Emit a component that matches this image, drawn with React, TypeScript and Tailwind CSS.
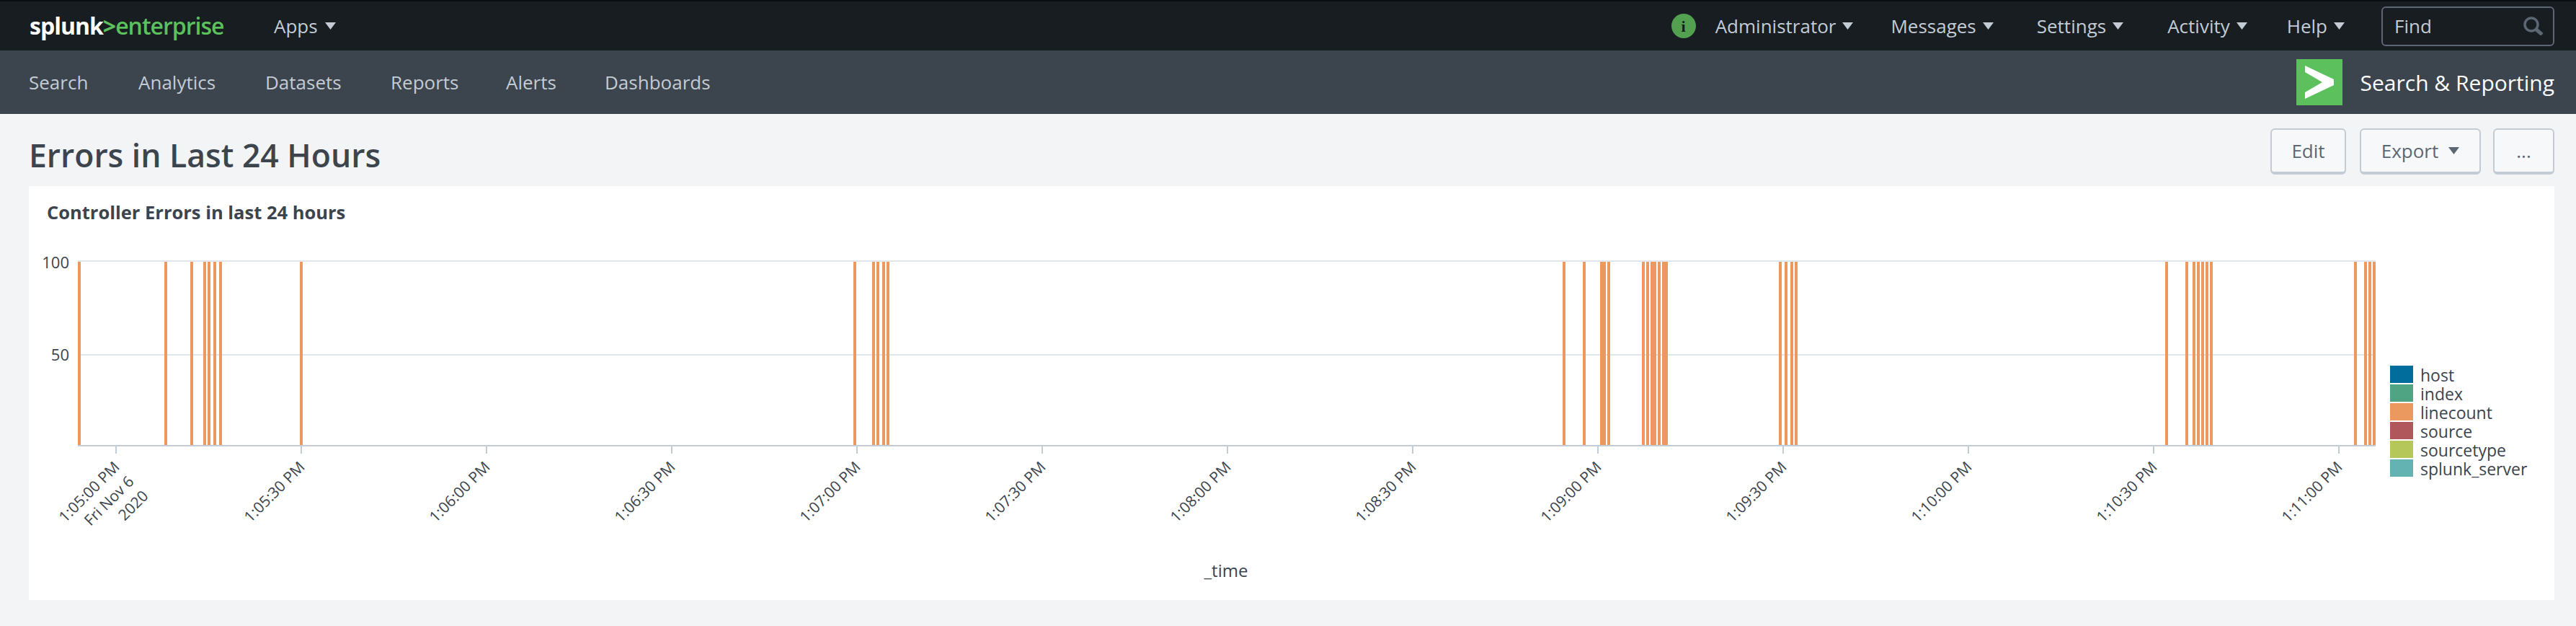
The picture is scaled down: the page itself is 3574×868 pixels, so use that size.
import React from 'react';

const fontStack = { fontFamily: '"Open Sans", Lato, sans-serif' };

const leftNav = [
  { label: 'Search', w: 'w-[152px]' },
  { label: 'Analytics', w: 'w-[176px]' },
  { label: 'Datasets', w: 'w-[174px]' },
  { label: 'Reports', w: 'w-[160px]' },
  { label: 'Alerts', w: 'w-[137px]' },
  { label: 'Dashboards', w: 'w-[160px]' },
];

const rightNav = [
  { label: 'Administrator', mr: 'mr-[52px]' },
  { label: 'Messages', mr: 'mr-[60px]' },
  { label: 'Settings', mr: 'mr-[61px]' },
  { label: 'Activity', mr: 'mr-[55px]' },
  { label: 'Help', mr: 'mr-[51px]' },
];

const bars = [
  [108, 112], [228, 232], [264, 268], [282, 286], [288, 292], [296, 300], [304, 308], [416, 420],
  [1184, 1188], [1210, 1214], [1216, 1220], [1224, 1228], [1230, 1234],
  [2168, 2172], [2196, 2200], [2220, 2228], [2230, 2234], [2278, 2282], [2284, 2288], [2290, 2298],
  [2300, 2304], [2306, 2314], [2468, 2472], [2476, 2480], [2484, 2488], [2490, 2494],
  [3004, 3008], [3032, 3036], [3042, 3046], [3048, 3052], [3054, 3058], [3060, 3064], [3066, 3070],
  [3266, 3270], [3280, 3284], [3286, 3290], [3292, 3296],
];

const ticks = [
  '1:05:30 PM', '1:06:00 PM', '1:06:30 PM', '1:07:00 PM', '1:07:30 PM', '1:08:00 PM',
  '1:08:30 PM', '1:09:00 PM', '1:09:30 PM', '1:10:00 PM', '1:10:30 PM', '1:11:00 PM',
];

const legend = [
  { name: 'host', color: 'bg-[#006d9c]' },
  { name: 'index', color: 'bg-[#4fa484]' },
  { name: 'linecount', color: 'bg-[#ec9960]' },
  { name: 'source', color: 'bg-[#af575a]' },
  { name: 'sourcetype', color: 'bg-[#b6c75a]' },
  { name: 'splunk_server', color: 'bg-[#62b3b2]' },
];

function Caret({ color = '#c3cbd4' }: { color?: string }) {
  return (
    <svg width="15" height="10" viewBox="0 0 15 10" className="shrink-0">
      <path d="M0 0h15L7.5 10z" fill={color} />
    </svg>
  );
}

function TickLabel({ x, lines }: { x: number; lines: string[] }) {
  return (
    <>
      {lines.map((line, i) => (
        <text
          key={line}
          transform={`translate(${x + 6 + i * 20} ${649 + i * 20}) rotate(-45)`}
          textAnchor="end"
          fontSize="21"
          fill="#3c444d"
        >
          {line}
        </text>
      ))}
    </>
  );
}

function Chart() {
  return (
    <svg width="3270" height="502" viewBox="40 330 3270 502" className="shrink-0">
      <rect x="108" y="361" width="3188" height="2" fill="#e1e6eb" />
      <rect x="108" y="491" width="3188" height="2" fill="#e1e6eb" />
      {bars.map(([a, b]) => (
        <rect key={a} x={a} y="363" width={b - a} height="254" fill="#ec9960" />
      ))}
      <rect x="108" y="617" width="3188" height="2" fill="#c3cbd4" />
      {[161, ...ticks.map((_, i) => 418 + i * 257)].map((x) => (
        <rect key={x} x={x - 1} y="619" width="2" height="10" fill="#c3cbd4" />
      ))}
      <text x="96" y="372" textAnchor="end" fontSize="22" fill="#3c444d">100</text>
      <text x="96" y="500" textAnchor="end" fontSize="22" fill="#3c444d">50</text>
      <TickLabel x={161} lines={['1:05:00 PM', 'Fri Nov 6', '2020']} />
      {ticks.map((label, i) => (
        <TickLabel key={label} x={418 + i * 257} lines={[label]} />
      ))}
      <text x="1701" y="800" textAnchor="middle" fontSize="24" fill="#3c444d">_time</text>
    </svg>
  );
}

export default function App() {
  return (
    <div className="min-h-[868px] bg-[#f2f4f5]" style={fontStack}>
      {/* Top bar */}
      <div className="flex h-[70px] items-center justify-between border-t-2 border-[#0b0e10] bg-[#171d21] pl-[41px] pr-[30px]">
        <div className="flex items-center">
          <div className="w-[339px] text-[32px] font-bold leading-none tracking-[-1px] text-white">
            splunk<span className="text-[#5cc05c]">&gt;</span>
            <span className="font-semibold text-[#5cc05c]">enterprise</span>
          </div>
          <div className="flex items-center gap-[10px] text-[26px] text-[#c3cbd4]">
            Apps <Caret />
          </div>
        </div>
        <div className="flex items-center">
          <div className="mr-[27px] flex h-[34px] w-[34px] items-center justify-center rounded-full bg-[#53a051] text-[22px] font-bold text-[#171d21]" style={{ fontFamily: '"Liberation Serif", serif' }}>
            i
          </div>
          {rightNav.map((item) => (
            <div key={item.label} className={`flex items-center gap-[9px] text-[26px] text-[#c3cbd4] ${item.mr}`}>
              {item.label} <Caret />
            </div>
          ))}
          <div className="flex h-[55px] w-[240px] items-center justify-between rounded-[6px] border-2 border-[#5c6773] pl-[16px] pr-[13px] text-[26px] text-[#c3cbd4]">
            Find
            <svg width="28" height="26" viewBox="0 0 28 26" fill="none" stroke="#5c6773" strokeWidth="3.5">
              <circle cx="11" cy="11" r="9" />
              <path d="M18 18l8 7" strokeWidth="5" />
            </svg>
          </div>
        </div>
      </div>

      {/* App bar */}
      <div className="flex h-[88px] items-center justify-between bg-[#3c444d] pl-10 pr-[30px]">
        <div className="flex items-center text-[26px] text-[#c3cbd4]">
          {leftNav.map((item) => (
            <div key={item.label} className={item.w}>{item.label}</div>
          ))}
        </div>
        <div className="flex items-center gap-[25px]">
          <div className="h-16 w-16 bg-[#5cc05c]">
            <svg width="64" height="64" viewBox="0 0 64 64" fill="#fff">
              <path d="M12 9L52 28V36L12 55V46L36 32L12 18Z" />
            </svg>
          </div>
          <div className="text-[30px] text-white">Search &amp; Reporting</div>
        </div>
      </div>

      {/* Title row */}
      <div className="flex h-[100px] items-start justify-between pl-10 pr-[30px] pt-5">
        <h1 className="mt-[15px] text-[44.5px] font-semibold leading-none text-[#3c444d]">Errors in Last 24 Hours</h1>
        <div className="flex items-center text-[26px] text-[#5c6773]">
          <button className="flex h-16 w-[105px] items-center justify-center rounded-[6px] border-2 border-b-4 border-[#c3cbd4] bg-[#f7f8fa]">Edit</button>
          <button className="ml-[19px] flex h-16 w-[168px] items-center justify-center gap-[14px] rounded-[6px] border-2 border-b-4 border-[#c3cbd4] bg-[#f7f8fa]">
            Export <Caret color="#5c6773" />
          </button>
          <button className="ml-[17px] flex h-16 w-[85px] items-center justify-center rounded-[6px] border-2 border-b-4 border-[#c3cbd4] bg-[#f7f8fa]">...</button>
        </div>
      </div>

      {/* Panel */}
      <div className="ml-10 mr-[30px] h-[574px] bg-white">
        <div className="h-[72px] pl-[25px] pt-[24px] text-[25.5px] font-bold leading-none text-[#3c444d]">
          Controller Errors in last 24 hours
        </div>
        <div className="flex items-start">
          <Chart />
          <div className="ml-[6px] mt-[177px] flex flex-col gap-[2px]">
            {legend.map((item) => (
              <div key={item.name} className="flex h-6 items-center gap-[10px] text-[23px] leading-none text-[#3c444d]">
                <div className={`h-6 w-8 ${item.color}`} />
                <span className="mt-[2px]">{item.name}</span>
              </div>
            ))}
          </div>
        </div>
      </div>
    </div>
  );
}
